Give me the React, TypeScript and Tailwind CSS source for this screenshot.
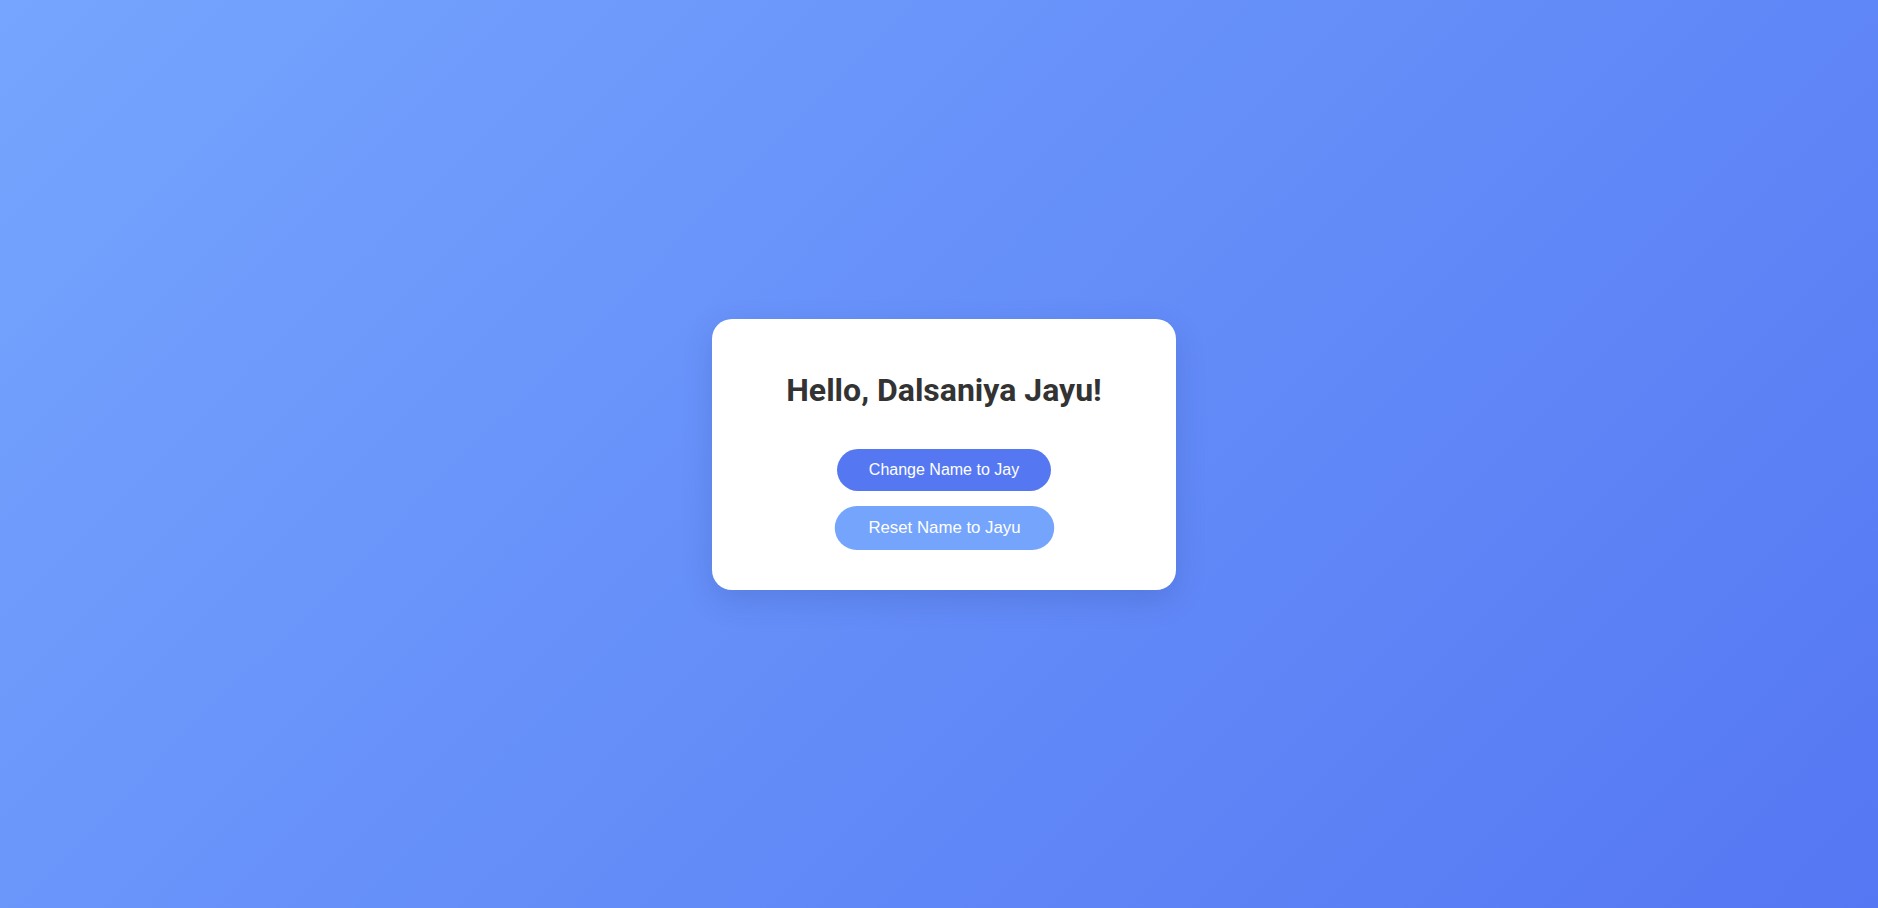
import { useState } from "react";

export default function App() {
  const [name, setName] = useState("Dalsaniya Jayu");

  return (
    <div className="h-screen w-full overflow-hidden flex items-center justify-center pl-[10px] bg-[linear-gradient(135deg,#75a5fe_0%,#5577f3_100%)]">
      <div className="w-[464px] h-[271px] bg-white rounded-[20px] shadow-[0_10px_30px_rgba(30,50,120,0.18)] flex flex-col items-center pt-[53px] pb-[39px]">
        <h1 className="text-[32px] leading-[37.5px] font-bold text-[#333333]" style={{ fontFamily: "Roboto, sans-serif" }}>
          Hello, {name}!
        </h1>
        <div className="flex flex-col items-center gap-4 mt-[40px]" style={{ fontFamily: "'Liberation Sans', Arial, sans-serif" }}>
          <button
            type="button"
            className="h-[42px] px-8 rounded-full bg-[#5578f2] text-white text-base"
            onClick={() => setName("Jay")}
          >
            Change Name to Jay
          </button>
          <button
            type="button"
            className="h-[42px] px-8 rounded-full bg-[#74a4fc] text-white text-base scale-105"
            onClick={() => setName("Dalsaniya Jayu")}
          >
            Reset Name to Jayu
          </button>
        </div>
      </div>
    </div>
  );
}
